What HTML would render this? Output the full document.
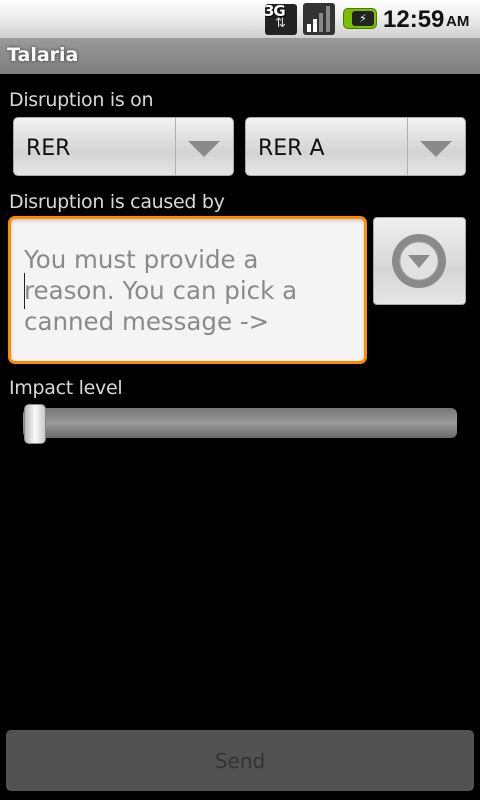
<!DOCTYPE html>
<html><head><meta charset="utf-8"><style>
*{margin:0;padding:0;box-sizing:border-box}
body{width:480px;height:800px;background:#000;position:relative;overflow:hidden;font-family:"DejaVu Sans","Liberation Sans",sans-serif}
.abs{position:absolute}
.status{left:0;top:0;width:480px;height:38px;background:linear-gradient(#fff,#e6e6e6 60%,#cfcfcf)}
.title{left:0;top:38px;width:480px;height:36px;background:linear-gradient(#9a9a9a,#7e7e7e)}
.title span{position:absolute;left:7px;top:6px;color:#fff;font-weight:bold;font-size:19px;text-shadow:0 0 3px #333}
.lbl{color:#d8d8d8;font-size:19px;left:9px;letter-spacing:-0.3px}
.spin{top:117px;height:59px;border-radius:5px;background:linear-gradient(#f2f2f2,#d4d4d4 60%,#e4e4e4);border:1px solid #aaa}
.spin .t{position:absolute;left:12px;top:18px;font-size:22px;color:#111}
.spin .d{position:absolute;right:57px;top:0;bottom:0;width:1px;background:#b0b0b0}
.spin .a{position:absolute;right:13px;top:23px;width:0;height:0;border-left:16px solid transparent;border-right:16px solid transparent;border-top:16px solid #8a8a8a}
.edit{left:8px;top:216px;width:359px;height:148px;border:3px solid #ff8a00;border-radius:7px;background:#f4f4f4;box-shadow:inset 0 2px 3px #ccc}
.edit p{position:absolute;left:13px;top:25px;font-size:24.5px;line-height:31px;color:#8a8a8a}
.btn{left:373px;top:217px;width:93px;height:88px;border-radius:4px;background:linear-gradient(#f0f0f0,#d6d6d6 60%,#e6e6e6);border:1px solid #aaa}
.track{left:23px;top:408px;width:434px;height:30px;border-radius:6px;background:linear-gradient(#777,#9a9a9a 50%,#6a6a6a)}
.thumb{left:24px;top:404px;width:22px;height:40px;border-radius:5px;background:linear-gradient(90deg,#bbb,#fafafa 50%,#c8c8c8);border:1px solid #888}
.send{left:6px;top:730px;width:468px;height:61px;border-radius:5px;background:#525252;color:#333;font-size:20px;text-align:center;line-height:63px}
</style></head><body>
<div class="abs status">
  <div class="abs" style="left:265px;top:4px;width:32px;height:31px;background:#222;border-radius:3px"></div>
  <div class="abs" style="left:264px;top:2px;font-size:15px;font-weight:bold;color:#fff;letter-spacing:-1px;text-shadow:1px 1px 0 #000">3G</div>
  <div class="abs" style="left:275px;top:16px;font-size:13px;color:#ddd">⇅</div>
  <div class="abs" style="left:303px;top:3px;width:32px;height:32px;background:#333;border-radius:3px"></div>
  <div class="abs" style="left:307px;top:24px;width:4px;height:8px;background:#fff"></div>
  <div class="abs" style="left:313px;top:19px;width:4px;height:13px;background:#fff"></div>
  <div class="abs" style="left:319px;top:13px;width:4px;height:19px;background:#888"></div>
  <div class="abs" style="left:326px;top:6px;width:4px;height:26px;background:#888"></div>
  <div class="abs" style="left:343px;top:8px;width:34px;height:21px;background:#7bbf00;border-radius:5px;border:1px solid #4a7a00"></div>
  <div class="abs" style="left:352px;top:11px;width:22px;height:15px;background:#222;border-radius:3px;color:#fff;font-size:11px;text-align:center;line-height:15px">⚡</div>
  <div class="abs" style="left:383px;top:6px;font-size:24px;font-weight:bold;color:#111;font-family:'Liberation Sans',sans-serif">12:59</div>
  <div class="abs" style="left:446px;top:13px;font-size:15px;font-weight:bold;color:#111;font-family:'Liberation Sans',sans-serif">AM</div>
</div>
<div class="abs title"><span>Talaria</span></div>
<div class="abs lbl" style="top:89px">Disruption is on</div>
<div class="abs spin" style="left:13px;width:221px"><span class="t">RER</span><span class="d"></span><span class="a"></span></div>
<div class="abs spin" style="left:245px;width:221px"><span class="t">RER A</span><span class="d"></span><span class="a"></span></div>
<div class="abs lbl" style="top:191px">Disruption is caused by</div>
<div class="abs edit"><p>You must provide a<br>reason. You can pick a<br>canned message -&gt;</p>
<div class="abs" style="left:13px;top:54px;width:1px;height:36px;background:#222"></div></div>
<div class="abs btn"><svg width="93" height="88" style="position:absolute;left:-1px;top:-1px">
<circle cx="46" cy="44" r="27" fill="#8a8a8a"/><circle cx="46" cy="44" r="19" fill="#e2e2e2"/><circle cx="46" cy="44" r="19" fill="none" stroke="#aaa" stroke-width="1"/>
<path d="M35 38 L57 38 L46 51 Z" fill="#8a8a8a"/></svg></div>
<div class="abs lbl" style="top:377px">Impact level</div>
<div class="abs track"></div>
<div class="abs thumb"></div>
<div class="abs send">Send</div>
</body></html>
